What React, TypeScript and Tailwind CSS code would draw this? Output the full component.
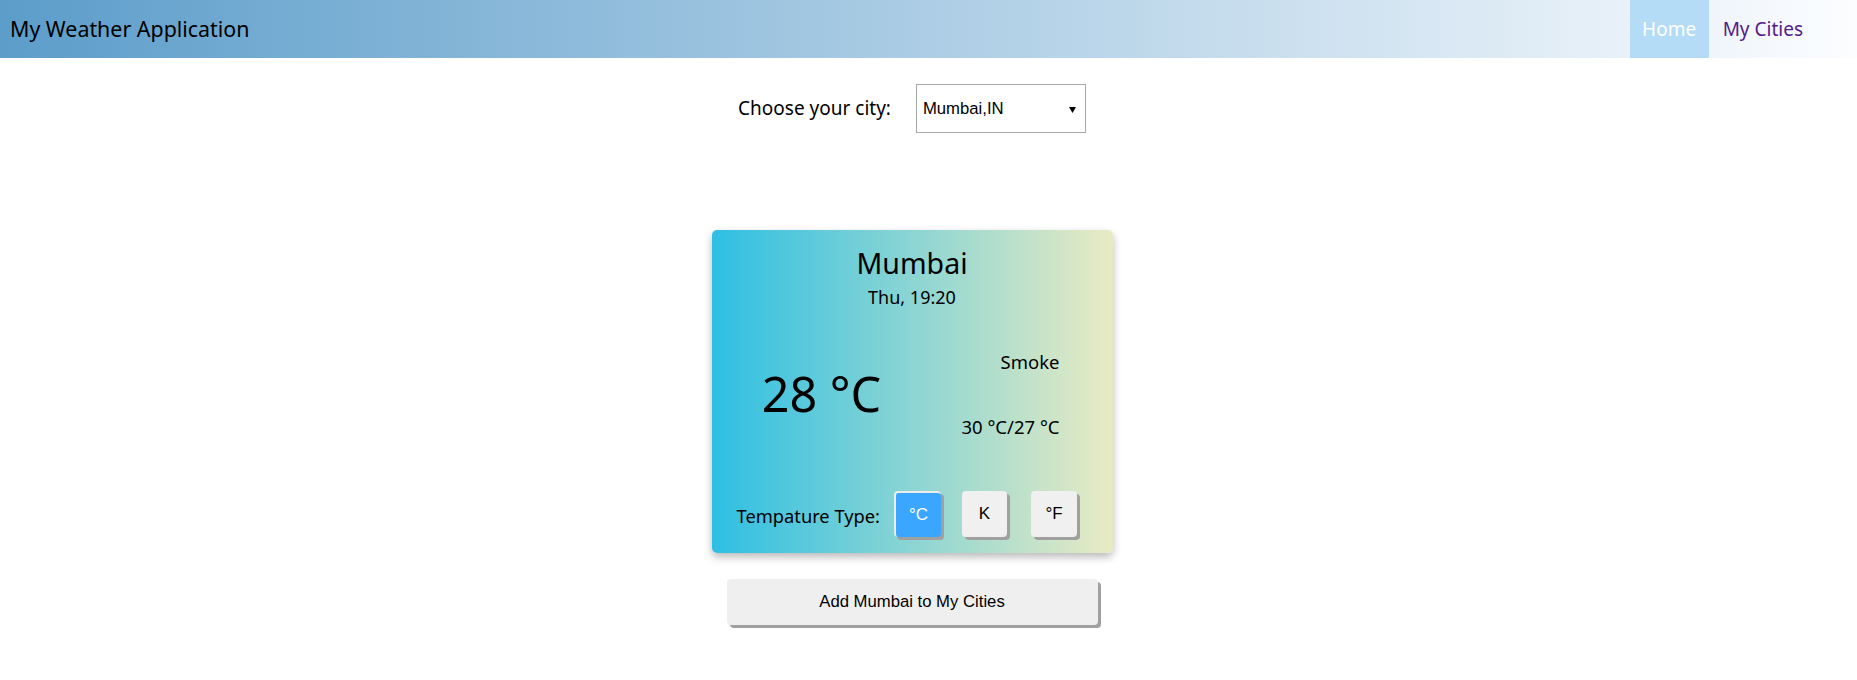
export default function App() {
  return (
    <div className="min-h-[680px] bg-white font-['Noto_Sans',sans-serif] text-black">
      <header className="h-[58px] flex items-stretch justify-between bg-[linear-gradient(to_right,#5c9dca,#fcfdff)]">
        <div className="flex items-center pl-[10px] text-[21.4px]">My Weather Application</div>
        <nav className="flex items-stretch pr-[40px] text-[19px]">
          <a className="flex items-center px-[12.5px] bg-[#b4dcf6] text-white">Home</a>
          <a className="flex items-center px-[14px] text-[#551a8b]">My Cities</a>
        </nav>
      </header>
      <main className="flex flex-col items-center pr-[33px]">
        <div className="mt-[26px] flex items-center h-[49px]">
          <span className="text-[19px] mr-[25px]">Choose your city:</span>
          <div className="relative w-[170px] h-[49px] border border-[#a9a9a9] flex items-center pl-[6px] font-['Liberation_Sans',sans-serif] text-[16.7px]">
            Mumbai,IN
            <svg className="absolute right-[9px] top-[22px]" width="7" height="6" viewBox="0 0 7 6">
              <polygon points="0,0 7,0 3.5,6" fill="#000" />
            </svg>
          </div>
        </div>

        <div className="mt-[97px] w-[401px] h-[323px] rounded-[5px] shadow-[0_4px_8px_rgba(0,0,0,0.28)] bg-[linear-gradient(to_right,#2ebfe3,#e9ebc3)] flex flex-col">
          <div className="pt-[15px] flex flex-col items-center">
            <div className="text-[28.5px] leading-[36px]">Mumbai</div>
            <div className="mt-[4px] text-[18px] leading-[24px]">Thu, 19:20</div>
          </div>
          <div className="flex items-start">
            <div className="w-[220px] mt-[54px] text-center text-[48.5px] leading-[60px]">28 °C</div>
            <div className="flex-1 flex flex-col items-end pr-[53px] mt-[41px] text-[18.5px] leading-[24px]">
              <div>Smoke</div>
              <div className="mt-[41px]">30 °C/27 °C</div>
            </div>
          </div>
          <div className="mt-auto pb-[16px] pl-[25px] flex items-center">
            <span className="text-[18.3px] leading-[24px] mt-[4px]">Tempature Type:</span>
            <button className="ml-[14px] w-[47px] h-[46px] rounded-[4px] bg-[#3aa6ff] border-t-2 border-l-2 border-[#ececec] shadow-[3px_3px_0_#a0a0a0] text-white font-['Liberation_Sans',sans-serif] text-[17px]">°C</button>
            <button className="ml-[21px] w-[45px] h-[46px] rounded-[4px] bg-[#f0f0f0] shadow-[3px_3px_0_#a0a0a0] font-['Liberation_Sans',sans-serif] text-[17px]">K</button>
            <button className="ml-[24px] w-[46px] h-[46px] rounded-[4px] bg-[#f0f0f0] shadow-[3px_3px_0_#a0a0a0] font-['Liberation_Sans',sans-serif] text-[17px]">°F</button>
          </div>
        </div>

        <button className="mt-[26px] w-[371px] h-[46px] rounded-[4px] bg-[#efefef] shadow-[3px_3px_0_#a0a0a0] font-['Liberation_Sans',sans-serif] text-[16.7px]">
          Add Mumbai to My Cities
        </button>
      </main>
    </div>
  );
}
